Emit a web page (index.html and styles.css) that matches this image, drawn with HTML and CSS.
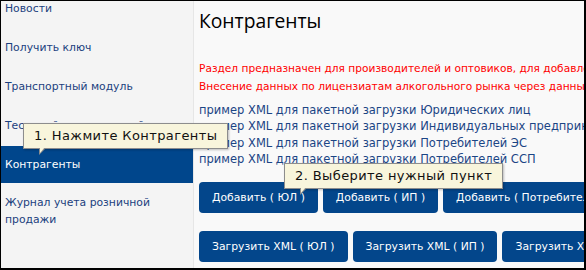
FILE: index.html
```html
<!DOCTYPE html>
<html>
<head>
<meta charset="utf-8">
<title>Контрагенты</title>
<link rel="stylesheet" href="styles.css">
</head>
<body>

<div class="frame">
	<div class="sidebar">
		<ul class="menu">
			<li><a href="#">Новости</a></li>
			<li><a href="#">Получить ключ</a></li>
			<li><a href="#">Транспортный модуль</a></li>
			<li class="single"><a href="#">Тестовый транспортный модуль</a></li>
			<li class="active"><a href="#">Контрагенты</a></li>
			<li class="tall"><a href="#">Журнал учета розничной продажи</a></li>
		</ul>
	</div>

	<div class="main">
		<h1>Контрагенты</h1>
		<p class="note">
			Раздел предназначен для производителей и оптовиков, для добавления контрагентов в справочник.<br>
			Внесение данных по лицензиатам алкогольного рынка через данный раздел не требуется.
		</p>
		<div class="samples">
			<a href="#">пример XML для пакетной загрузки Юридических лиц</a>
			<a href="#">пример XML для пакетной загрузки Индивидуальных предпринимателей</a>
			<a href="#">пример XML для пакетной загрузки Потребителей ЭС</a>
			<a href="#">пример XML для пакетной загрузки Потребителей ССП</a>
		</div>
		<div class="btn-row">
			<button type="button" class="btn">Добавить ( ЮЛ )</button>
			<button type="button" class="btn">Добавить ( ИП )</button>
			<button type="button" class="btn">Добавить ( Потребитель ЭС )</button>
		</div>
		<div class="btn-row">
			<button type="button" class="btn">Загрузить XML ( ЮЛ )</button>
			<button type="button" class="btn">Загрузить XML ( ИП )</button>
			<button type="button" class="btn">Загрузить XML ( Потребитель ЭС )</button>
		</div>
	</div>

	<div class="hint hint-one">1. Нажмите Контрагенты</div>
	<div class="hint hint-two">2. Выберите нужный пункт</div>
</div>

</body>
</html>
```

FILE: styles.css
```css
body {
	margin: 0;
	font-family: "DejaVu Sans", Verdana, sans-serif;
}
.frame {
	position: relative;
	display: flex;
	width: 583px;
	height: 267px;
	border-style: solid;
	border-color: #000;
	border-width: 1px 2px 2px 1px;
	overflow: hidden;
	background-color: #f9f9f9;
}

/* left menu */
.sidebar {
	width: 192px;
	flex-shrink: 0;
	background-color: #f4f4f4;
	border-right: 1px solid #e6e6e6;
}
.menu {
	list-style: none;
	margin: -11px 0 0 0;
	padding: 0;
}
.menu li {
	height: 37px;
	margin-bottom: 2px;
	display: flex;
	align-items: center;
	padding-left: 4px;
	font-size: 10.8px;
	line-height: 17px;
}
.menu li.single {
	white-space: nowrap;
	overflow: hidden;
}
.menu li.tall {
	height: 52px;
}
.menu a {
	color: #1b3f7e;
	text-decoration: none;
}
.menu li.active {
	background-color: #00468c;
}
.menu li.active a {
	color: #fff;
}

/* content */
.main {
	flex: 1;
	min-width: 0;
	padding-left: 5px;
	white-space: nowrap;
	overflow: hidden;
}
h1 {
	margin: 7px 0 0 0;
	font-family: "Open Sans", sans-serif;
	font-weight: normal;
	font-size: 19.3px;
	line-height: 26px;
	color: #000;
}
.note {
	margin: 25px 0 0 0;
	font-size: 10.6px;
	line-height: 18px;
	color: #ff0000;
}
.samples {
	margin-top: 7px;
	display: flex;
	flex-direction: column;
}
.samples a {
	font-size: 11.5px;
	line-height: 16.3px;
	color: #1b4585;
	text-decoration: none;
}
.btn-row {
	display: flex;
	gap: 5px;
	margin-top: 15px;
}
.btn-row + .btn-row {
	margin-top: 18px;
}
.btn {
	flex-shrink: 0;
	height: 31px;
	padding: 0 13px;
	border: none;
	border-radius: 4px;
	background-color: #03468b;
	color: #fff;
	font-family: "DejaVu Sans", Verdana, sans-serif;
	font-size: 10.8px;
}

/* callouts */
.hint {
	position: absolute;
	padding: 0 10px;
	height: 24px;
	line-height: 24px;
	background-color: #f8f5dc;
	border: 1px solid #8d8d8d;
	box-shadow: 1px 1px 2px rgba(0,0,0,0.25);
	font-size: 13px;
	letter-spacing: 0.4px;
	color: #111;
	white-space: nowrap;
}
.hint::before,
.hint::after {
	content: "";
	position: absolute;
	border-style: solid;
	border-color: transparent;
}
.hint::before {
	left: 15px;
	bottom: -7px;
	border-width: 7px 7px 0 0;
	border-top-color: #8d8d8d;
}
.hint::after {
	left: 16px;
	bottom: -5px;
	border-width: 6px 5px 0 0;
	border-top-color: #f8f5dc;
}
.hint-one {
	left: 22px;
	top: 122px;
}
.hint-two {
	left: 283px;
	top: 162px;
}
```
